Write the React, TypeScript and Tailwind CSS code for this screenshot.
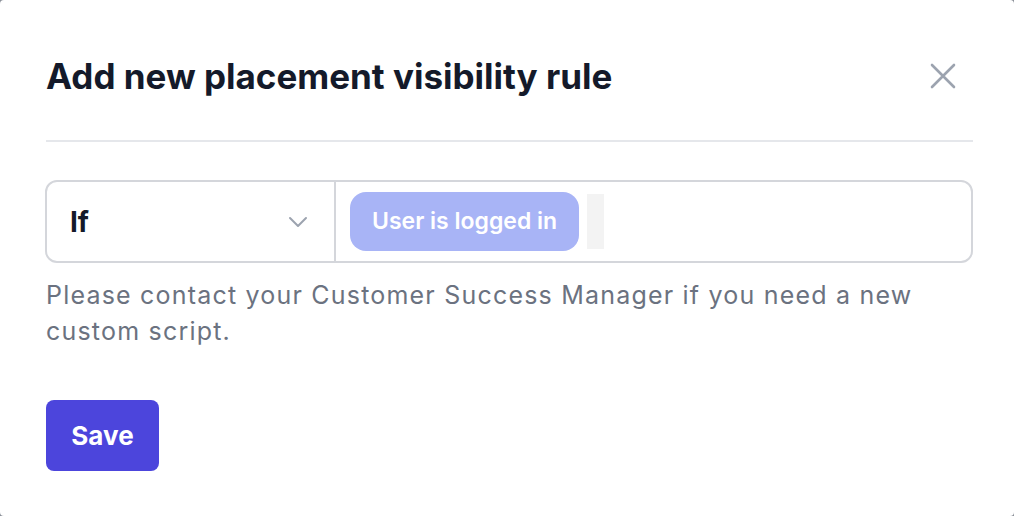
import React from "react";

export default function App() {
  return (
    <div className="w-[1014px] h-[516px] bg-[#8a8f98] overflow-hidden" style={{ fontFamily: "Inter, 'Noto Sans', sans-serif" }}>
      <div className="bg-white h-full rounded-[4px] pl-[46px] pr-[41px] pt-[56px]">
        <div className="flex items-center justify-between h-[40px]">
          <h1 className="text-[35px] leading-[40px] font-bold text-[#141a2a] tracking-[0px]">Add new placement visibility rule</h1>
          <svg width="26" height="26" viewBox="0 0 26 26" className="mr-[17px]" fill="none" stroke="#9ca3af" strokeWidth="2.6" strokeLinecap="round">
            <path d="M2 2 L24 24 M24 2 L2 24" />
          </svg>
        </div>
        <div className="h-[2px] bg-[#e5e7eb] mt-[44px]" />
        <div className="mt-[38px] h-[83px] flex border-2 border-[#d4d6db] rounded-[12px] -ml-[1px]">
          <div className="w-[289px] flex items-center justify-between pl-[23px] pr-[26px] border-r-2 border-[#d4d6db]">
            <span className="text-[28px] font-bold text-[#141a2a]">If</span>
            <svg width="20" height="12" viewBox="0 0 20 12" fill="none" stroke="#9ca3af" strokeWidth="2" strokeLinecap="round" strokeLinejoin="round">
              <path d="M2 2 L10 10 L18 2" />
            </svg>
          </div>
          <div className="flex items-center pl-[14px] gap-[8px]">
            <span className="h-[59px] px-[22px] rounded-[16px] bg-[#a8b4f6] text-white text-[23px] font-semibold flex items-center">User is logged in</span>
            <span className="w-[17px] h-[55px] bg-[#f3f3f3]" />
          </div>
        </div>
        <p className="mt-[14px] text-[25px] leading-[36px] text-[#6b7280] max-w-[885px] tracking-[1.2px]">
          Please contact your Customer Success Manager if you need a new custom script.
        </p>
        <button className="mt-[51px] w-[113px] h-[71px] rounded-[8px] bg-[#4c45dc] text-white text-[26px] font-bold">Save</button>
      </div>
    </div>
  );
}
